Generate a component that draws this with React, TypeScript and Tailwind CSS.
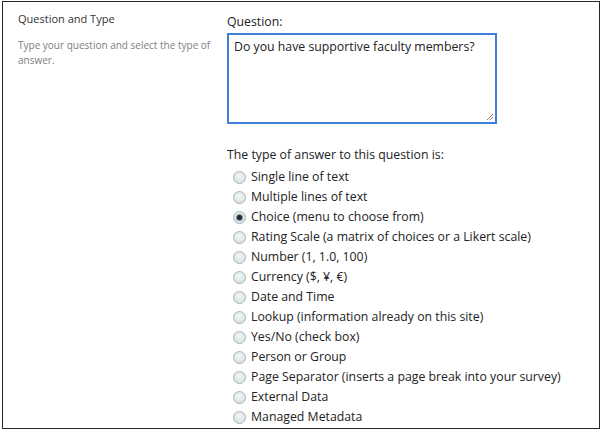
import React from "react";

const options = [
  "Single line of text",
  "Multiple lines of text",
  "Choice (menu to choose from)",
  "Rating Scale (a matrix of choices or a Likert scale)",
  "Number (1, 1.0, 100)",
  "Currency ($, ¥, €)",
  "Date and Time",
  "Lookup (information already on this site)",
  "Yes/No (check box)",
  "Person or Group",
  "Page Separator (inserts a page break into your survey)",
  "External Data",
  "Managed Metadata",
];

function Radio({ checked }: { checked?: boolean }) {
  return (
    <span className="relative flex h-[13px] w-[13px] shrink-0 items-center justify-center rounded-full border border-[#a9b3b8] bg-[radial-gradient(circle_at_50%_40%,#f1f6f6,#d2dede)]">
      {checked && (
        <span className="h-[5px] w-[5px] rounded-full bg-[#2a2a2a] ring-1 ring-[#7a94b0]" />
      )}
    </span>
  );
}

export default function App() {
  return (
    <div className="h-[430px] w-[601px] bg-white pl-[2px] pt-[1px] [font-family:'Open_Sans',sans-serif]">
      <div className="flex h-[428px] w-[598px] border-[1.5px] border-[#262626] bg-white">
        <div className="w-[207px] shrink-0 pl-[15px] pt-[9px]">
          <div className="text-[11px] leading-[16px] text-[#333]">Question and Type</div>
          <div className="mt-[11px] w-[200px] text-[10px] leading-[15px] text-[#808080]">
            Type your question and select the type of answer.
          </div>
        </div>
        <div className="flex flex-col pl-[17px] pt-[11px]">
          <div className="text-[12.3px] leading-[18px] text-[#222]">Question:</div>
          <div className="relative mt-[2px] h-[91px] w-[270px] border-2 border-[#3f7fd8] px-[5px] py-[3px] text-[12.3px] leading-[18px] text-[#222]">
            Do you have supportive faculty members?
            <svg className="absolute bottom-[1px] right-[1px]" width="9" height="9" viewBox="0 0 9 9">
              <path d="M8 2 L2 8 M8 5 L5 8" stroke="#a0785a" strokeWidth="1" />
            </svg>
          </div>
          <div className="mt-[22px] text-[12.3px] leading-[18px] text-[#222]">
            The type of answer to this question is:
          </div>
          <div className="mt-[3px] flex flex-col pl-[6px]">
            {options.map((o, i) => (
              <div key={o} className="flex h-[20px] items-center gap-[5px] text-[12.3px] text-[#222]">
                <Radio checked={i === 2} />
                <span className="leading-[18px]">{o}</span>
              </div>
            ))}
          </div>
        </div>
      </div>
    </div>
  );
}
